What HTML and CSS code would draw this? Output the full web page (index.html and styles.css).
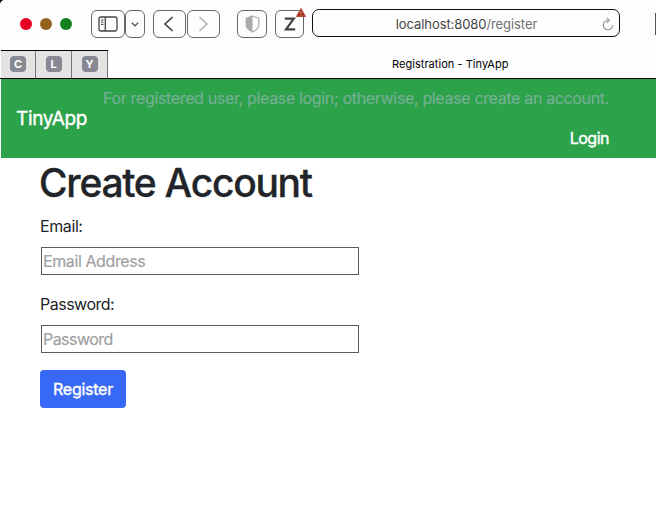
FILE: index.html
```html
<!DOCTYPE html>
<html lang="en">
<head>
<meta charset="utf-8">
<title>Registration - TinyApp</title>
<link rel="stylesheet" href="styles.css">
</head>
<body>
<div class="window">
  <header class="toolbar">
    <div class="lights"><i class="light red"></i><i class="light amber"></i><i class="light green"></i></div>
    <div class="tool sidebar">
      <svg width="20" height="16" viewBox="0 0 20 16" fill="none" stroke="#444" stroke-width="1.3"><rect x="1" y="1" width="18" height="14" rx="1.8"/><path d="M7.3 1v14"/><path d="M3 4h2.500M3 6.200h2.500M3 8.400h2.500" stroke-width="1"/></svg>
    </div>
    <div class="tool dropdown">
      <svg width="8" height="5" viewBox="0 0 8 5" fill="none" stroke="#555" stroke-width="1.3"><path d="M.8.8 4 3.8 7.2.8"/></svg>
    </div>
    <div class="tool back">
      <svg width="9" height="16" viewBox="0 0 9 16" fill="none" stroke="#444" stroke-width="1.7" stroke-linecap="round"><path d="M8 1.500 1 8l7 6.500"/></svg>
    </div>
    <div class="tool forward">
      <svg width="9" height="16" viewBox="0 0 9 16" fill="none" stroke="#aaa" stroke-width="1.4" stroke-linecap="round"><path d="m1 1.500 7 6.500-7 6.500"/></svg>
    </div>
    <div class="tool shield">
      <svg width="15" height="18" viewBox="0 0 15 18"><path d="M7.500 1 13.800 3.300V10c0 3-3 5.300-6.300 7C4.200 15.300 1.200 13 1.200 10V3.300Z" fill="#fff" stroke="#aaa" stroke-width="1.200"/><path d="M7.500 1v16C4.200 15.300 1.200 13 1.200 10V3.300Z" fill="#aaa"/></svg>
    </div>
    <div class="tool zotero">
      <svg width="12" height="14" viewBox="0 0 12 14" fill="none" stroke="#444" stroke-width="2.200"><path d="M.8 1.600h9L2 12.400h9.200"/></svg>
      <svg class="warning" width="10" height="9" viewBox="0 0 10 9"><path d="M5 .3 9.700 8.700H.3Z" fill="#aa3521" stroke="#aa3521" stroke-width=".6" stroke-linejoin="round"/><path d="M5 3v3M5 7v1" stroke="#d98d7c" stroke-width=".9"/></svg>
    </div>
    <div class="address"><span class="url">localhost:8080<span class="path">/register</span></span>
      <svg class="reload" width="12" height="14" viewBox="0 0 12 14" fill="none" stroke="#8d8d8d" stroke-width="1.100"><path d="M6 3.300A4.700 4.700 0 1 0 10.700 8M4.800.8 7.300 3.300 4.800 5.800"/></svg>
    </div>
    <div class="edge"></div>
  </header>
  <div class="tabs">
    <div class="pins"><span class="pin"><b>C</b></span><span class="pin"><b>L</b></span><span class="pin"><b>Y</b></span></div>
    <div class="current"><span>Registration - TinyApp</span></div>
  </div>
  <nav class="navbar">
    <a class="brand">TinyApp</a>
    <div class="links"><span class="notice">For registered user, please login; otherwise, please create an account.</span><a class="login">Login</a></div>
  </nav>
  <main class="content">
    <h1>Create Account</h1>
    <form>
      <label for="email" class="l-email">Email:</label>
      <input id="email" type="email" placeholder="Email Address">
      <label for="password" class="l-pass">Password:</label>
      <input id="password" type="password" placeholder="Password">
      <button type="button">Register</button>
    </form>
  </main>
</div>
</body>
</html>
```
FILE: styles.css
```css
* { box-sizing: border-box; }
body { margin: 0; background: #000; font: 16px/24px Inter, "Liberation Sans", sans-serif; color: #212529; }
.window { height: 518px; overflow: hidden; background: #fff; border-radius: 5px 0 0 0; }
.toolbar { height: 50px; background: #fdfdfd; display: flex; align-items: flex-start; padding-top: 10px; }
.lights { display: flex; gap: 8px; margin: 8px 19px 0 20px; }
.light { width: 12px; height: 12px; border-radius: 50%; }
.red { background: #e60023; }
.amber { background: #94621f; }
.green { background: #108020; }
.tool { height: 28px; flex: none; border: 1px solid #666; border-radius: 6px; display: flex; align-items: center; justify-content: center; position: relative; }
.sidebar { width: 34px; }
.dropdown { width: 20px; }
.back { width: 33px; margin-left: 8px; padding-right: 3px; }
.forward { width: 33px; margin-left: 1px; }
.shield { width: 30px; margin-left: 17px; }
.zotero { width: 29px; margin-left: 8px; }
.warning { position: absolute; right: -3px; top: -3px; }
.address { width: 308px; height: 28px; flex: none; margin: -1px 0 0 8px; border: 1px solid #111; border-radius: 7px; display: flex; align-items: center; justify-content: center; position: relative; font-size: 13px; color: #444; }
.url { letter-spacing: -.08px; padding: 2px 0 0 1px; }
.path { color: #707070; }
.reload { position: absolute; right: 5px; top: 7px; }
.edge { margin: 3px 0 0 35px; width: 1px; height: 22px; background: #555; }
.tabs { height: 29px; background: #fdfdfd; border-bottom: 1px solid #000; display: flex; }
.pins { display: flex; margin-left: 1px; border-top: 1px solid #000; background: #e3e3e3; }
.pin { width: 36px; border-right: 1px solid #777; display: flex; justify-content: center; padding-top: 5px; }
.pin:first-child { width: 35px; }
.pin b { width: 16px; height: 16px; border-radius: 4px; background: #888794; color: #fff; font-size: 11px; line-height: 16px; text-align: center; }
.current { flex: 1; padding-left: 284px; font-size: 11px; line-height: 28px; color: #000; }
.current span { letter-spacing: .04px; }
.navbar { height: 79px; margin-left: 1px; background: #2ca24a; padding: 0 47px 0 15px; display: flex; align-items: center; justify-content: space-between; white-space: nowrap; }
.brand { color: #fff; font-size: 19px; letter-spacing: -.35px; -webkit-text-stroke: .4px #fff; margin-top: 1px; }
.links { display: flex; flex-direction: column; align-items: flex-end; gap: 16px; margin-top: -2px; }
.notice { color: #73b093; letter-spacing: -.345px; -webkit-text-stroke: .2px #73b093; }
.login { color: #fff; letter-spacing: -.5px; -webkit-text-stroke: .4px #fff; }
.content { padding: 1px 0 0 39px; }
h1 { margin: 0 0 7px; font-size: 39px; line-height: 48px; font-weight: 500; letter-spacing: -1.28px; -webkit-text-stroke: .3px #212529; }
form { display: flex; flex-direction: column; align-items: flex-start; padding-left: 1px; }
label { letter-spacing: -.4px; }
input { width: 318px; height: 28px; margin: 9px 0 17px 1px; border: 1px solid #5a5a5d; padding: 0 1px; font: inherit; letter-spacing: -.4px; background: #fff; }
input::placeholder { color: #a0a0a2; opacity: 1; -webkit-text-stroke: .2px #a0a0a2; }
.l-pass { letter-spacing: -.5px; }
#password { letter-spacing: -.55px; }
button { width: 86px; height: 38px; border: 0; border-radius: 4px; background: #3768f6; color: #fff; font: inherit; letter-spacing: -.25px; padding: 0; -webkit-text-stroke: .4px #fff; }
```
